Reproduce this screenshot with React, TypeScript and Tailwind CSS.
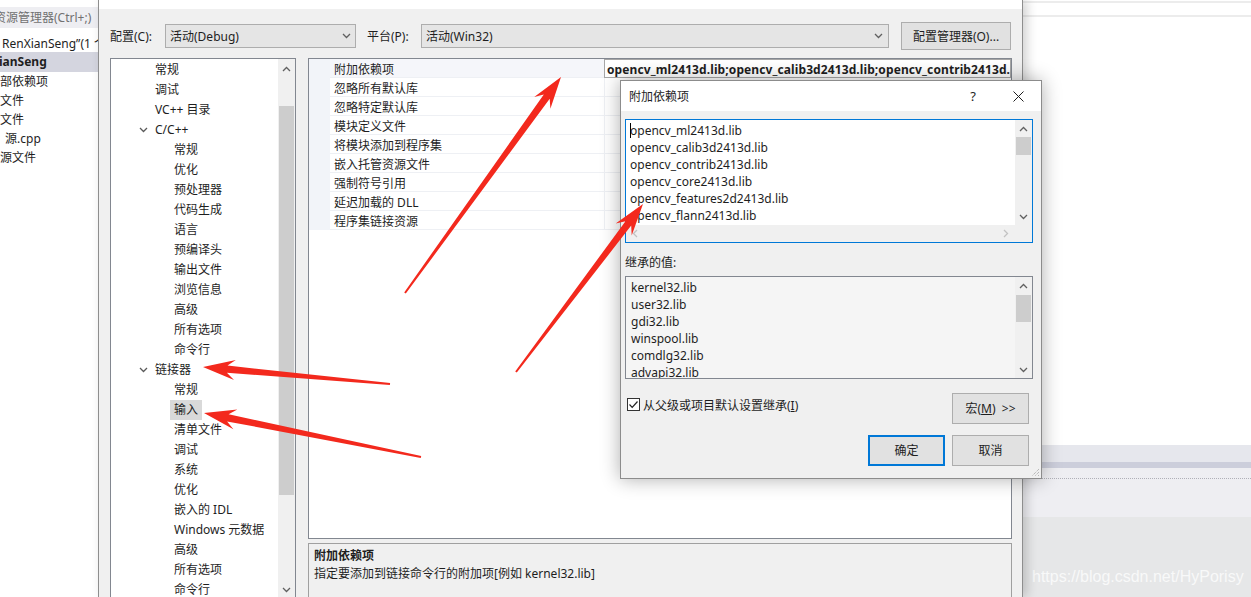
import React from "react";

type TreeNode = { label: string; level: 1 | 2; open?: boolean; active?: boolean };

const tree: TreeNode[] = [
  { label: "常规", level: 1 },
  { label: "调试", level: 1 },
  { label: "VC++ 目录", level: 1 },
  { label: "C/C++", level: 1, open: true },
  { label: "常规", level: 2 },
  { label: "优化", level: 2 },
  { label: "预处理器", level: 2 },
  { label: "代码生成", level: 2 },
  { label: "语言", level: 2 },
  { label: "预编译头", level: 2 },
  { label: "输出文件", level: 2 },
  { label: "浏览信息", level: 2 },
  { label: "高级", level: 2 },
  { label: "所有选项", level: 2 },
  { label: "命令行", level: 2 },
  { label: "链接器", level: 1, open: true },
  { label: "常规", level: 2 },
  { label: "输入", level: 2, active: true },
  { label: "清单文件", level: 2 },
  { label: "调试", level: 2 },
  { label: "系统", level: 2 },
  { label: "优化", level: 2 },
  { label: "嵌入的 IDL", level: 2 },
  { label: "Windows 元数据", level: 2 },
  { label: "高级", level: 2 },
  { label: "所有选项", level: 2 },
  { label: "命令行", level: 2 },
];

const linkerInput = [
  "附加依赖项",
  "忽略所有默认库",
  "忽略特定默认库",
  "模块定义文件",
  "将模块添加到程序集",
  "嵌入托管资源文件",
  "强制符号引用",
  "延迟加载的 DLL",
  "程序集链接资源",
];

const deps = [
  "opencv_ml2413d.lib",
  "opencv_calib3d2413d.lib",
  "opencv_contrib2413d.lib",
  "opencv_core2413d.lib",
  "opencv_features2d2413d.lib",
  "opencv_flann2413d.lib",
  "opencv_gpu2413d.lib",
];

const inherited = [
  "kernel32.lib",
  "user32.lib",
  "gdi32.lib",
  "winspool.lib",
  "comdlg32.lib",
  "advapi32.lib",
  "shell32.lib",
];

// small scroll / dropdown chevrons
const Caret = ({ dir, color = "#606060" }: { dir: "up" | "down" | "left" | "right"; color?: string }) => {
  const pts = {
    up: "1,5 4.5,1.5 8,5",
    down: "1,1 4.5,4.5 8,1",
    left: "5,1 1.5,4.5 5,8",
    right: "1,1 4.5,4.5 1,8",
  }[dir];
  const horiz = dir === "left" || dir === "right";
  return (
    <svg width={horiz ? 6 : 9} height={horiz ? 9 : 6} viewBox={horiz ? "0 0 6 9" : "0 0 9 6"}>
      <polyline points={pts} fill="none" stroke={color} strokeWidth="1.3" />
    </svg>
  );
};

const VScroll = ({ thumb, upH = "h-[17px]" }: { thumb: string; upH?: string }) => (
  <div className="w-[17px] shrink-0 bg-[#f0f0f0] flex flex-col">
    <div className={`${upH} flex items-center justify-center`}>
      <Caret dir="up" />
    </div>
    <div className="flex-1 flex flex-col items-center">
      <div className={`w-[15px] bg-[#cdcdcd] ${thumb}`} />
    </div>
    <div className="h-[17px] flex items-center justify-center">
      <Caret dir="down" />
    </div>
  </div>
);

const arrowPoints = (x1: number, y1: number, x2: number, y2: number) => {
  const dx = x2 - x1;
  const dy = y2 - y1;
  const len = Math.hypot(dx, dy);
  const ux = dx / len;
  const uy = dy / len;
  const nx = -uy;
  const ny = ux;
  const head = 32;
  const barb = 10;
  const neck = 3.6;
  const tail = 1;
  const bx = x2 - ux * head;
  const by = y2 - uy * head;
  const kx = x2 - ux * head * 0.76;
  const ky = y2 - uy * head * 0.76;
  const pts = [
    [x1 + nx * tail, y1 + ny * tail],
    [kx + nx * neck, ky + ny * neck],
    [bx + nx * barb, by + ny * barb],
    [x2, y2],
    [bx - nx * barb, by - ny * barb],
    [kx - nx * neck, ky - ny * neck],
    [x1 - nx * tail, y1 - ny * tail],
  ];
  return pts.map((p) => p.map((v) => v.toFixed(1)).join(",")).join(" ");
};

const Explorer = () => (
  <div className="w-[98px] shrink-0 h-full bg-white flex flex-col text-[12px] text-[#1e1e1e] overflow-hidden whitespace-nowrap">
    <div className="h-[7px]" />
    <div className="h-[21px] bg-[#eeeef2] flex items-center text-[#717171] -ml-[6px]">资源管理器(Ctrl+;)</div>
    <div className="h-[7px]" />
    <div className="h-[17px] leading-[17px] pl-[2px]">RenXianSeng”(1 个项目)</div>
    <div className="h-[20px] leading-[20px] bg-[#d4d5df] font-bold -ml-[1px]">ianSeng</div>
    <div className="leading-[19px]">
      <div>部依赖项</div>
      <div>文件</div>
      <div>文件</div>
      <div className="pl-[2px]">&nbsp;源.cpp</div>
      <div>源文件</div>
    </div>
  </div>
);

const Toolbar = () => (
  <div className="mt-[13px] h-[28px] flex items-center pl-[11px] text-[12px]">
    <span className="w-[55px] pt-[2px]">配置(C):</span>
    <div className="w-[191px] h-[24px] bg-[#e5e5e5] border border-[#adadad] flex items-center pl-[4px] pr-[4px]">
      <span className="flex-1 pt-[2px]">活动(Debug)</span>
      <Caret dir="down" />
    </div>
    <span className="ml-[11px] w-[54px] pt-[2px]">平台(P):</span>
    <div className="w-[468px] h-[24px] bg-[#e5e5e5] border border-[#adadad] flex items-center pl-[4px] pr-[5px]">
      <span className="flex-1 pt-[2px]">活动(Win32)</span>
      <Caret dir="down" />
    </div>
    <button className="ml-[12px] w-[110px] h-[28px] pt-[2px] bg-[#e1e1e1] border border-[#adadad] flex items-center justify-center">
      配置管理器(O)...
    </button>
  </div>
);

const PageTree = () => (
  <div className="w-[186px] h-[541px] shrink-0 bg-white border border-[#828790] flex text-[12px]">
    <div className="flex-1 flex flex-col pt-[1px]">
      {tree.map((n, i) => (
        <div key={i} className="h-[20px] shrink-0 flex items-center whitespace-nowrap">
          {n.level === 1 ? (
            <div className="pl-[28px] flex items-center">
              <div className="w-[16px] flex items-center">{n.open && <Caret dir="down" color="#5a5a5a" />}</div>
              <span>{n.label}</span>
            </div>
          ) : (
            <div className="pl-[59px] h-full flex items-center">
              <span className={`h-full flex items-center px-[4px] ${n.active ? "bg-[#d9d9d9]" : ""}`}>{n.label}</span>
            </div>
          )}
        </div>
      ))}
    </div>
    <VScroll upH="h-[20px]" thumb="mt-[27px] h-[389px]" />
  </div>
);

const PropertyGrid = () => (
  <div className="h-[481px] shrink-0 bg-white border border-[#828790] text-[12px]">
    {linkerInput.map((name, i) => (
      <div key={name} className="h-[19px] flex">
        <div className="w-[21px] bg-[#f2f4f9]" />
        <div
          className={`w-[274px] pl-[4px] pt-[4px] leading-[14px] border-b border-[#eef0f4] ${i === 0 ? "bg-[#f5f6fa]" : ""}`}
        >
          {name}
        </div>
        {i === 0 ? (
          <div className="flex-1 border border-[#a6a6a6] bg-white pl-[2px] pt-[2px] leading-[15px] font-bold tracking-[0.1px] overflow-hidden whitespace-nowrap">
            opencv_ml2413d.lib;opencv_calib3d2413d.lib;opencv_contrib2413d.lib;opencv_core2413d.lib
          </div>
        ) : (
          <div className="flex-1 border-l border-b border-[#eef0f4]" />
        )}
      </div>
    ))}
  </div>
);

const Description = () => (
  <div className="mt-[4px] h-[70px] shrink-0 bg-[#f0f0f0] border border-[#a0a0a0] px-[5px] pt-[3px] text-[12px] leading-[18px]">
    <div className="font-bold">附加依赖项</div>
    <div>指定要添加到链接命令行的附加项[例如 kernel32.lib]</div>
  </div>
);

const PropertyPages = () => (
  <div className="relative z-10 w-[925px] shrink-0 h-full bg-[#f0f0f0] border-l border-r border-[#8e8e8e] flex flex-col overflow-hidden shadow-[4px_0_10px_rgba(0,0,0,0.18)] text-[#1e1e1e]">
    <div className="h-[9px] bg-white shrink-0" />
    <Toolbar />
    <div className="mt-[8px] flex gap-[12px] pl-[11px]">
      <PageTree />
      <div className="w-[704px] flex flex-col">
        <PropertyGrid />
        <Description />
      </div>
    </div>
  </div>
);

const Backdrop = () => (
  <div className="flex-1 h-full bg-white flex flex-col">
    <div className="h-[1px]" />
    <div className="h-[2px] bg-[#ececec]" />
    <div className="h-[12px]" />
    <div className="h-[2px] bg-[#ececec]" />
    <div className="flex-1" />
    <div className="h-[17px] bg-[#e6e7ed]" />
    <div className="h-[6px] bg-[#cccedb]" />
    <div className="h-[49px] bg-[#eeeef2] pt-[10px]">
      <div className="border-t border-dotted border-[#b0b0b8]" />
    </div>
    <div className="h-[80px] bg-[#e6e7e8] pl-[9px] pt-[50px] font-['Liberation_Sans',sans-serif] text-[16px] leading-[20px] text-white/75 whitespace-nowrap">
      https://blog.csdn.net/HyPorisy
    </div>
  </div>
);

const DepsDialog = () => (
  <div className="absolute left-[620px] top-[80px] z-20 w-[422px] h-[399px] bg-[#f0f0f0] border border-[#8c8c8c] shadow-[0_0_18px_rgba(0,0,0,0.32)] flex flex-col text-[12px] text-[#1e1e1e]">
    <div className="h-[30px] bg-white flex items-center pl-[8px] pt-[1px]">
      <span className="flex-1">附加依赖项</span>
      <span className="w-[44px] text-center text-[13px]">?</span>
      <span className="w-[46px] flex justify-center">
        <svg width="11" height="11" viewBox="0 0 11 11">
          <path d="M0.5 0.5 L10.5 10.5 M10.5 0.5 L0.5 10.5" stroke="#1e1e1e" strokeWidth="1" />
        </svg>
      </span>
    </div>
    <div className="flex-1 flex flex-col pl-[4px] pr-[8px] pt-[8px] relative">
      {/* editable list */}
      <div className="h-[124px] border border-[#0078d7] bg-white flex flex-col">
        <div className="flex-1 flex min-h-0">
          <div className="flex-1 overflow-hidden pl-[4px] pt-[2px] leading-[17px] whitespace-nowrap">
            {deps.map((d, i) => (
              <div key={d} className="relative">
                {i === 0 && <span className="absolute left-0 top-[1px] h-[15px] w-[1px] bg-black" />}
                {d}
              </div>
            ))}
          </div>
          <VScroll thumb="mt-0 h-[18px]" />
        </div>
        <div className="h-[17px] flex bg-[#f0f0f0]">
          <div className="flex-1 flex items-center justify-between pl-[6px] pr-[6px]">
            <Caret dir="left" color="#c2c2c2" />
            <Caret dir="right" color="#c2c2c2" />
          </div>
          <div className="w-[17px]" />
        </div>
      </div>

      <div className="mt-[12px] h-[16px] leading-[16px]">继承的值:</div>

      {/* read-only inherited list */}
      <div className="mt-[5px] h-[103px] border border-[#828790] bg-[#f5f5f5] flex">
        <div className="flex-1 overflow-hidden pl-[5px] pt-[2px] leading-[17px]">
          {inherited.map((d) => (
            <div key={d}>{d}</div>
          ))}
        </div>
        <VScroll thumb="mt-[1px] h-[27px]" />
      </div>

      <div className="mt-[14px] h-[31px] flex items-start pr-[4px]">
        <div className="ml-[2px] mt-[5px] w-[13px] h-[13px] border border-[#333] bg-white flex items-center justify-center">
          <svg width="11" height="11" viewBox="0 0 11 11">
            <polyline points="1.5,5.5 4.2,8.3 9.5,2.5" fill="none" stroke="#222" strokeWidth="1.2" />
          </svg>
        </div>
        <span className="ml-[3px] mt-[5px] leading-[16px] flex-1">
          从父级或项目默认设置继承(<span className="underline">I</span>)
        </span>
        <button className="w-[77px] h-[31px] bg-[#e1e1e1] border border-[#adadad]">
          宏(<span className="underline">M</span>)&nbsp;&nbsp;&gt;&gt;
        </button>
      </div>

      <div className="mt-[11px] h-[31px] flex justify-end gap-[7px] pr-[4px]">
        <button className="w-[77px] h-[31px] bg-[#e1e1e1] border-2 border-[#0078d7]">确定</button>
        <button className="w-[77px] h-[31px] bg-[#e1e1e1] border border-[#adadad]">取消</button>
      </div>

      {/* resize grip */}
      <svg className="absolute right-[1px] bottom-[1px]" width="11" height="11" viewBox="0 0 11 11">
        <path d="M10 3 L3 10 M10 6 L6 10 M10 9 L9 10" stroke="#a0a0a0" strokeWidth="1" strokeDasharray="1 1" />
      </svg>
    </div>
  </div>
);

const Annotations = () => (
  <svg className="absolute inset-0 z-30 pointer-events-none" width="1251" height="597" viewBox="0 0 1251 597">
    <g fill="#f3291d">
      <polygon points={arrowPoints(405, 293, 561, 77)} />
      <polygon points={arrowPoints(516, 372, 643, 204)} />
      <polygon points={arrowPoints(390, 384, 203, 367)} />
      <polygon points={arrowPoints(421, 457, 204, 413)} />
    </g>
  </svg>
);

export default function App() {
  return (
    <div className="relative w-[1251px] h-[597px] overflow-hidden flex bg-white font-['Noto_Sans','Noto_Sans_CJK_SC',sans-serif] text-[12px]">
      <Explorer />
      <PropertyPages />
      <Backdrop />
      <DepsDialog />
      <Annotations />
    </div>
  );
}
